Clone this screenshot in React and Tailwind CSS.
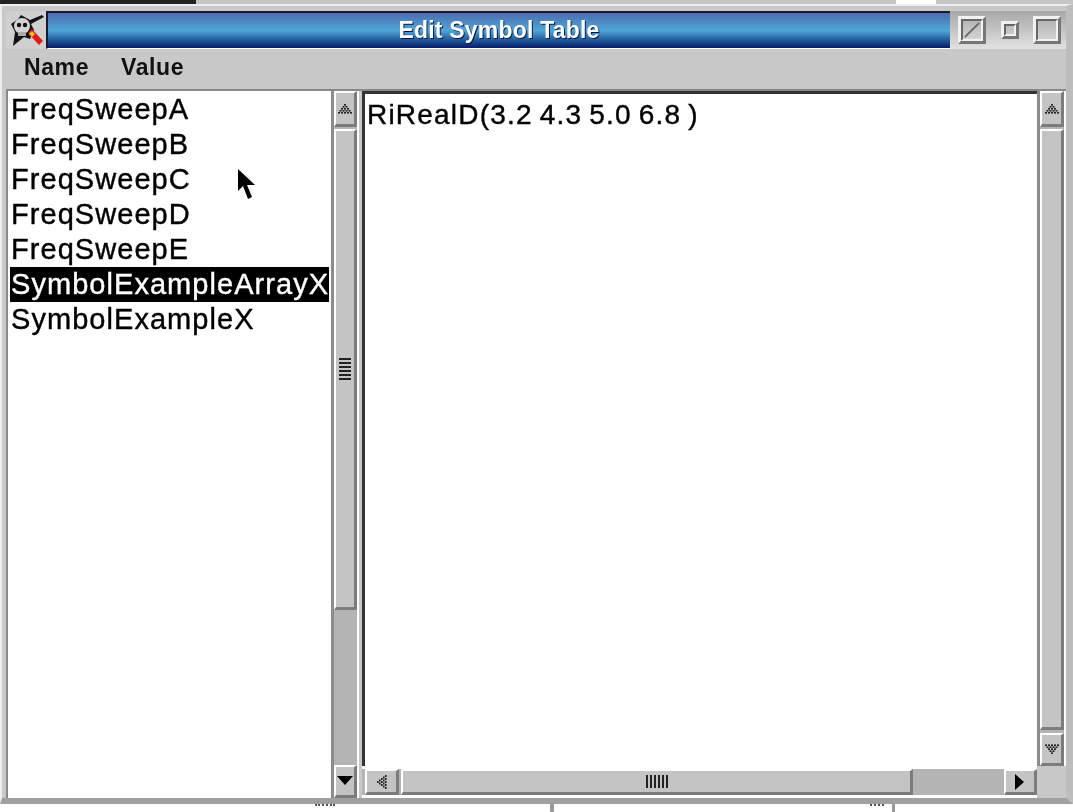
import React from 'react';

const names = ['FreqSweepA', 'FreqSweepB', 'FreqSweepC', 'FreqSweepD', 'FreqSweepE', 'SymbolExampleArrayX', 'SymbolExampleX'];

// stippled or solid scroll arrow
function Arrow({ dir, solid }) {
  const rot = { up: 0, right: 90, down: 180, left: 270 }[dir];
  const dots = [];
  for (let row = 0; row < 5; row++) {
    for (let i = 0; i <= row; i++) {
      dots.push(<rect key={row + '-' + i} x={8 + (i - row / 2) * 3} y={1 + row * 2} width="2" height="1.6" fill="#222" />);
    }
  }
  return <svg width="18" height="14" viewBox="0 0 18 12" style={{ transform: `rotate(${rot}deg)` }}>
      {solid ? <path d="M9 2 L17 11 L1 11 Z" fill="#000" /> : dots}
    </svg>;
}

// raised motif bevel
function Bevel({ className, children }) {
  return <div className={`flex items-center justify-center bg-[#c4c4c4] border-t-2 border-l-2 border-r-[3px] border-b-[3px] border-t-white border-l-white border-r-[#7c7c7c] border-b-[#7c7c7c] ${className}`}>
      {children}
    </div>;
}

function Grip({ vertical }) {
  return <div className={`flex ${vertical ? 'flex-col gap-[2px]' : 'flex-row gap-[2px]'}`}>
      {[0, 1, 2, 3, 4, 5].map(i => <div key={i} className={`bg-[#222] ${vertical ? 'w-[12px] h-[2px]' : 'w-[2px] h-[13px]'}`} />)}
    </div>;
}

function VScroll({ thumbH, downSolid, width, grip }) {
  return <div className={`flex flex-col items-stretch bg-[#b4b4b4] border-l-[3px] border-l-[#8c8c8c] border-r-2 border-r-white shrink-0 ${width}`}>
      <Bevel className="h-[36px]"><Arrow dir="up" /></Bevel>
      <Bevel className={`mt-[2px] ${thumbH}`}>{grip && <Grip vertical />}</Bevel>
      <div className="flex-1" />
      <Bevel className="h-[33px]"><Arrow dir="down" solid={downSolid} /></Bevel>
    </div>;
}

function WindowButton({ size, children }) {
  return <div className={`relative border-[3px] border-t-[#f2f2f2] border-l-[#f2f2f2] border-r-[#777] border-b-[#777] shrink-0 ${size}`}>
      <div className="w-full h-full border-2 border-t-[#666] border-l-[#666] border-r-[#f2f2f2] border-b-[#f2f2f2]">{children}</div>
    </div>;
}

export default function App() {
  return <div className="w-[1073px] h-[812px] overflow-hidden flex flex-col bg-[#c6c6c6] text-black blur-[0.4px]" style={{ fontFamily: '"Liberation Sans", Arial, sans-serif' }}>
      <div className="h-[4px] shrink-0 flex bg-[#c6c6c6]">
        <div className="w-[196px] bg-[#222]" />
        <div className="w-[700px]" />
        <div className="w-[40px] bg-white" />
      </div>

      <div className="h-[800px] shrink-0 flex flex-col bg-[#c8c8c8] border-t-2 border-t-[#eee] border-l-2 border-l-[#eee] border-r-[7px] border-r-[#bdbdbd] border-b-[6px] border-b-[#a0a0a0] pl-[4px]">
        {/* title row */}
        <div className="mt-[5px] h-[38px] shrink-0 flex items-stretch bg-gradient-to-b from-[#a8a8a8] to-[#e2e2e2]">
          <div className="w-[40px] shrink-0 flex items-center justify-center bg-[#d0d0d0]">
            <svg width="36" height="36" viewBox="0 0 36 36">
              <path d="M3 12 L7 20 L5 34 L16 25 L22 27 L26 18 L23 12 L36 5 L34 3 L22 8 L13 3 L10 7 Z" fill="#141414" />
              <circle cx="14" cy="14" r="8" fill="#d4d4d4" />
              <circle cx="11" cy="13" r="2.2" fill="#111" />
              <circle cx="17" cy="13" r="2.2" fill="#111" />
              <rect x="10" y="20" width="8" height="4" fill="#aaa" />
              <path d="M20 21 L24 17 L35 29 L31 33 Z" fill="#e01818" />
              <path d="M21 22 L24 19 L27 22 L24 25 Z" fill="#f0c020" />
            </svg>
          </div>
          <div className="w-[904px] shrink-0 flex items-center justify-center border-t-2 border-t-[#1a1a2a] border-l-2 border-l-[#1a1a2a] border-b border-b-white bg-gradient-to-b from-[#4a6db0] via-[#4fa6d6] to-[#0a1a68] text-white font-bold text-[23px] tracking-[0.2px]" style={{ textShadow: '1px 1px 0 #0a1440' }}>
            Edit Symbol Table
          </div>
          <div className="flex-1 flex items-center justify-between pl-[8px] pr-[5px]">
            <WindowButton size="w-[28px] h-[28px]">
              <svg width="100%" height="100%" viewBox="0 0 20 20"><path d="M2 18 L18 2" stroke="#666" strokeWidth="2" /></svg>
            </WindowButton>
            <WindowButton size="w-[18px] h-[18px]" />
            <WindowButton size="w-[28px] h-[28px]" />
          </div>
        </div>

        {/* menu */}
        <div className="h-[35px] shrink-0 flex items-center pl-[18px] pt-[2px] gap-[32px] font-bold text-[23px] tracking-[0.6px] text-[#111]">
          <span>Name</span>
          <span>Value</span>
        </div>

        {/* panes */}
        <div className="h-[709px] shrink-0 mt-[5px] flex items-stretch border-t-2 border-t-[#888]">
          <div className="w-[325px] shrink-0 bg-white border-l-2 border-l-[#888] pt-[1px] overflow-hidden text-[29px] tracking-[1.05px] leading-[35px] [-webkit-text-stroke:0.4px]">
            {names.map(n => <div key={n} className={`mx-[2px] pl-[1px] whitespace-nowrap ${n === 'SymbolExampleArrayX' ? 'bg-black text-white' : ''}`}>{n}</div>)}
          </div>
          <VScroll width="w-[28px]" thumbH="h-[481px]" downSolid grip />
          <div className="w-[3px] shrink-0" />
          <div className="flex-1 flex flex-col min-w-0">
            <div className="flex-1 flex items-stretch min-h-0">
              <div className="w-[675px] shrink-0 bg-white border-t-[3px] border-t-[#333] border-l-[3px] border-l-[#333] pl-[2px] pt-[3px] text-[28px] tracking-[1.2px] [word-spacing:-2px] leading-[35px] whitespace-nowrap [-webkit-text-stroke:0.4px]">
                RiRealD(3.2 4.3 5.0 6.8 )
              </div>
              <VScroll width="flex-1" thumbH="h-[601px]" />
            </div>
            <div className="h-[32px] shrink-0 flex items-stretch">
              <div className="w-[675px] shrink-0 flex items-stretch bg-[#b4b4b4] border-t-[3px] border-t-white border-b-[3px] border-b-white pl-[3px]">
                <Bevel className="w-[34px]"><Arrow dir="left" /></Bevel>
                <Bevel className="w-[512px] ml-[2px]"><Grip /></Bevel>
                <div className="flex-1" />
                <Bevel className="w-[33px]"><Arrow dir="right" solid /></Bevel>
              </div>
              <div className="flex-1 bg-[#c8c8c8]" />
            </div>
          </div>
        </div>
      </div>

      <div className="flex-1 flex bg-white">
        <div className="w-[550px] bg-white flex justify-center">
          <div className="w-[20px] h-[3px] ml-[100px] border-t-2 border-dotted border-[#555]" />
        </div>
        <div className="w-[4px] bg-[#999]" />
        <div className="w-[330px] flex justify-end">
          <div className="w-[14px] h-[3px] border-t-2 border-dotted border-[#555]" />
        </div>
        <div className="w-[3px] ml-[8px] bg-[#999]" />
        <div className="flex-1" />
      </div>

      {/* pointer */}
      <svg className="absolute left-[237px] top-[168px]" width="19" height="33" viewBox="0 0 19 33">
        <path d="M1 1 L1 23 L6 18 L11 31 L15 29 L10 17 L18 17 Z" fill="#000" />
      </svg>
    </div>;
}
